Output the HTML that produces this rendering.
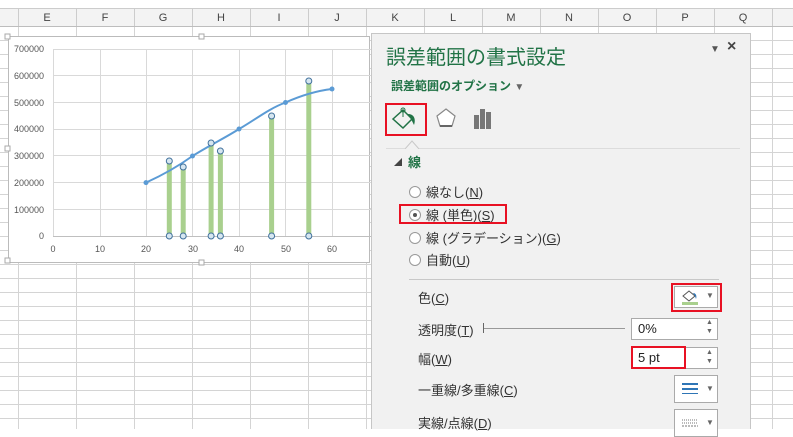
<!DOCTYPE html>
<html><head><meta charset="utf-8"><style>
*{margin:0;padding:0;box-sizing:border-box}
body{width:793px;height:429px;overflow:hidden;position:relative;background:#fff;font-family:"Liberation Sans","Noto Sans CJK JP",sans-serif;}
.grid{position:absolute;left:0;top:27px;width:793px;height:402px;
background-image:linear-gradient(to right,#d4d4d4 1px,transparent 1px),linear-gradient(to bottom,#d4d4d4 1px,transparent 1px);
background-size:58px 14px;background-position:18px 13px,0 13px;}
.hdr{position:absolute;left:0;top:8px;width:793px;height:19px;background:#f3f3f3;border-top:1px solid #ccc;border-bottom:1px solid #bdbdbd;
background-image:linear-gradient(to right,#ccc 1px,transparent 1px);background-size:58px 19px;background-position:18px 0;}
.hdr span{position:absolute;top:3px;font-size:11px;color:#444;width:58px;text-align:center}
.top{position:absolute;left:0;top:0;width:793px;height:8px;background:#fff}
.chart{position:absolute;left:8px;top:36px;width:362px;height:227px;background:#fff;border:1px solid #bbb}
.panel{position:absolute;left:371px;top:33px;width:380px;height:396px;background:#f1f1f1;border-left:1px solid #c6c6c6;border-right:1px solid #c6c6c6;border-top:1px solid #c6c6c6}
.t{position:absolute;white-space:nowrap}
.g{color:#217346}
.lbl{font-size:13px;color:#333}
.red{position:absolute;border:2px solid #e81123}
.box{position:absolute;background:#fff;border:1px solid #aaa}
.radio{position:absolute;width:12px;height:12px;border:1px solid #999;border-radius:50%;background:#fff}
u{text-decoration:underline}
</style></head><body>
<div class="top"></div>
<div class="hdr">
<span style="left:18px">E</span><span style="left:76px">F</span><span style="left:134px">G</span><span style="left:192px">H</span><span style="left:250px">I</span><span style="left:308px">J</span><span style="left:366px">K</span><span style="left:424px">L</span><span style="left:482px">M</span><span style="left:540px">N</span><span style="left:598px">O</span><span style="left:656px">P</span><span style="left:714px">Q</span>
</div>
<div class="grid"></div>
<div class="chart"></div>
<svg style="position:absolute;left:0;top:0" width="371" height="270" font-family="Liberation Sans" font-size="9" fill="#555">
<g stroke="#d9d9d9" stroke-width="1">
<line x1="53" y1="49.5" x2="371" y2="49.5"/><line x1="53" y1="75.5" x2="371" y2="75.5"/><line x1="53" y1="102.5" x2="371" y2="102.5"/><line x1="53" y1="129.5" x2="371" y2="129.5"/><line x1="53" y1="155.5" x2="371" y2="155.5"/><line x1="53" y1="182.5" x2="371" y2="182.5"/><line x1="53" y1="209.5" x2="371" y2="209.5"/>
<line x1="53.5" y1="49" x2="53.5" y2="236"/><line x1="100.5" y1="49" x2="100.5" y2="236"/><line x1="146.5" y1="49" x2="146.5" y2="236"/><line x1="192.5" y1="49" x2="192.5" y2="236"/><line x1="239.5" y1="49" x2="239.5" y2="236"/><line x1="285.5" y1="49" x2="285.5" y2="236"/><line x1="332.5" y1="49" x2="332.5" y2="236"/>
</g>
<line x1="53" y1="236.5" x2="371" y2="236.5" stroke="#bfbfbf"/>
<g text-anchor="end"><text x="44" y="52">700000</text><text x="44" y="79">600000</text><text x="44" y="106">500000</text><text x="44" y="132">400000</text><text x="44" y="159">300000</text><text x="44" y="186">200000</text><text x="44" y="213">100000</text><text x="44" y="239">0</text></g>
<g text-anchor="middle"><text x="53" y="252">0</text><text x="100" y="252">10</text><text x="146" y="252">20</text><text x="193" y="252">30</text><text x="239" y="252">40</text><text x="286" y="252">50</text><text x="332" y="252">60</text></g>
<g stroke="#a9d08e" stroke-width="5">
<line x1="169.3" y1="161" x2="169.3" y2="236"/><line x1="183.2" y1="167" x2="183.2" y2="236"/><line x1="211.1" y1="143" x2="211.1" y2="236"/><line x1="220.4" y1="151" x2="220.4" y2="236"/><line x1="271.6" y1="116" x2="271.6" y2="236"/><line x1="308.8" y1="81" x2="308.8" y2="236"/>
</g>
<path d="M146,182.6 C165,174 180,165 192.5,156 C210,145 225,138 239,129 C255,120 268,109 285.5,102.5 C300,96 315,91 332,89" fill="none" stroke="#5b9bd5" stroke-width="2"/>
<g fill="#5b9bd5"><circle cx="146" cy="182.6" r="2.5"/><circle cx="192.5" cy="156" r="2.5"/><circle cx="239" cy="129" r="2.5"/><circle cx="285.5" cy="102.5" r="2.5"/><circle cx="332" cy="89" r="2.5"/></g>
<g fill="#d6e6f0" stroke="#41719c" stroke-width="1">
<circle cx="169.3" cy="161" r="3"/><circle cx="183.2" cy="167" r="3"/><circle cx="211.1" cy="143" r="3"/><circle cx="220.4" cy="151" r="3"/><circle cx="271.6" cy="116" r="3"/><circle cx="308.8" cy="81" r="3"/>
<circle cx="169.3" cy="236" r="3"/><circle cx="183.2" cy="236" r="3"/><circle cx="211.1" cy="236" r="3"/><circle cx="220.4" cy="236" r="3"/><circle cx="271.6" cy="236" r="3"/><circle cx="308.8" cy="236" r="3"/>
</g>
<g fill="#fff" stroke="#aaa"><rect x="5" y="34" width="5" height="5"/><rect x="199" y="34" width="5" height="5"/><rect x="5" y="258" width="5" height="5"/><rect x="199" y="260" width="5" height="5"/><rect x="5" y="146" width="5" height="5"/></g>
</svg>

<div class="panel">
<div class="t g" style="left:14px;top:7px;font-size:20px">誤差範囲の書式設定</div>
<div class="t" style="left:338px;top:10px;font-size:10px;color:#555">▼</div>
<div class="t" style="left:355px;top:4px;font-size:16px;color:#444;font-weight:bold">×</div>
<div class="t g" style="left:19px;top:43px;font-size:12px;font-weight:bold">誤差範囲のオプション <span style="color:#666;font-size:10px">▼</span></div>
<div class="red" style="left:13px;top:69px;width:42px;height:33px"></div>
<svg style="position:absolute;left:18px;top:71px" width="30" height="28"><path d="M3,14 L13,5 L22,14 L13,23 Z" fill="none" stroke="#217346" stroke-width="1.5"/><circle cx="13" cy="5" r="2" fill="none" stroke="#217346"/><line x1="13" y1="5" x2="13" y2="12" stroke="#217346"/><path d="M18,9 C24,9 26,14 24,20 L22,16 Z" fill="#217346"/></svg>
<svg style="position:absolute;left:62px;top:72px" width="24" height="26"><path d="M12,3 L21,10 L18,20 L6,20 L3,10 Z" fill="#fff" stroke="#888" stroke-width="1.2"/><line x1="6" y1="20" x2="18" y2="20" stroke="#666" stroke-width="2"/></svg>
<svg style="position:absolute;left:100px;top:72px" width="24" height="26"><rect x="2" y="9" width="5" height="14" fill="#777"/><rect x="8" y="3" width="5" height="20" fill="#777"/><rect x="14" y="6" width="5" height="17" fill="#777"/></svg>
<svg style="position:absolute;left:14px;top:103px" width="354" height="12"><polyline points="0,12 19,12 26,4 33,12 354,12" fill="none" stroke="#c8c8c8"/></svg>
<div class="t" style="left:22px;top:123px;font-size:8px;color:#444">◢</div>
<div class="t g" style="left:36px;top:118px;font-size:13px;font-weight:bold">線</div>
<div class="radio" style="left:37px;top:152px"></div><div class="t lbl" style="left:54px;top:148px">線なし(<u>N</u>)</div>
<div class="radio" style="left:37px;top:175px"><div style="width:4px;height:4px;background:#555;border-radius:50%;margin:3px"></div></div><div class="t lbl" style="left:54px;top:171px">線 (単色)(<u>S</u>)</div>
<div class="red" style="left:27px;top:170px;width:108px;height:20px"></div>
<div class="radio" style="left:37px;top:198px"></div><div class="t lbl" style="left:54px;top:194px">線 (グラデーション)(<u>G</u>)</div>
<div class="radio" style="left:37px;top:220px"></div><div class="t lbl" style="left:54px;top:216px">自動(<u>U</u>)</div>
<div style="position:absolute;left:37px;top:245px;width:310px;height:1px;background:#c8c8c8"></div>
<div class="t lbl" style="left:46px;top:254px">色(<u>C</u>)</div>
<div class="box" style="left:302px;top:252px;width:44px;height:22px"></div>
<svg style="position:absolute;left:308px;top:254px" width="20" height="18"><path d="M3,8 L9,3 L15,8 L9,13 Z" fill="#fff" stroke="#555"/><path d="M13,5 C16,5 17,8 16,11 L15,8Z" fill="#2e75b6"/><rect x="2" y="14" width="16" height="3" fill="#a9d08e"/></svg>
<div class="t" style="left:334px;top:257px;font-size:8px;color:#666">▼</div>
<div class="red" style="left:299px;top:249px;width:51px;height:29px"></div>
<div class="t lbl" style="left:46px;top:286px">透明度(<u>T</u>)</div>
<div style="position:absolute;left:111px;top:289px;width:1px;height:10px;background:#666"></div>
<div style="position:absolute;left:112px;top:294px;width:141px;height:1px;background:#999"></div>
<div class="box" style="left:259px;top:284px;width:87px;height:22px"></div>
<div class="t lbl" style="left:266px;top:287px;color:#222">0%</div>
<div class="t" style="left:334px;top:284px;font-size:7px;color:#666;line-height:9px">▲<br>▼</div>
<div class="t lbl" style="left:46px;top:315px">幅(<u>W</u>)</div>
<div class="box" style="left:259px;top:313px;width:87px;height:22px"></div>
<div class="red" style="left:259px;top:312px;width:55px;height:23px"></div>
<div class="t lbl" style="left:266px;top:316px;color:#222">5 pt</div>
<div class="t" style="left:334px;top:314px;font-size:7px;color:#666;line-height:9px">▲<br>▼</div>
<div class="t lbl" style="left:46px;top:346px">一重線/多重線(<u>C</u>)</div>
<div class="box" style="left:302px;top:341px;width:44px;height:28px"></div>
<svg style="position:absolute;left:310px;top:348px" width="20" height="14"><rect x="0" y="1" width="16" height="2" fill="#2e75b6"/><rect x="0" y="6" width="16" height="2" fill="#2e75b6"/><rect x="0" y="11" width="16" height="1" fill="#2e75b6"/></svg>
<div class="t" style="left:334px;top:350px;font-size:8px;color:#666">▼</div>
<div class="t lbl" style="left:46px;top:379px">実線/点線(<u>D</u>)</div>
<div class="box" style="left:302px;top:375px;width:44px;height:28px"></div>
<svg style="position:absolute;left:310px;top:385px" width="20" height="10"><line x1="0" y1="1" x2="16" y2="1" stroke="#777" stroke-dasharray="1,1"/><line x1="0" y1="4" x2="16" y2="4" stroke="#777" stroke-dasharray="1,1"/><line x1="0" y1="7" x2="16" y2="7" stroke="#777" stroke-dasharray="2,1"/></svg>
<div class="t" style="left:334px;top:384px;font-size:8px;color:#666">▼</div>
</div>
</body></html>
